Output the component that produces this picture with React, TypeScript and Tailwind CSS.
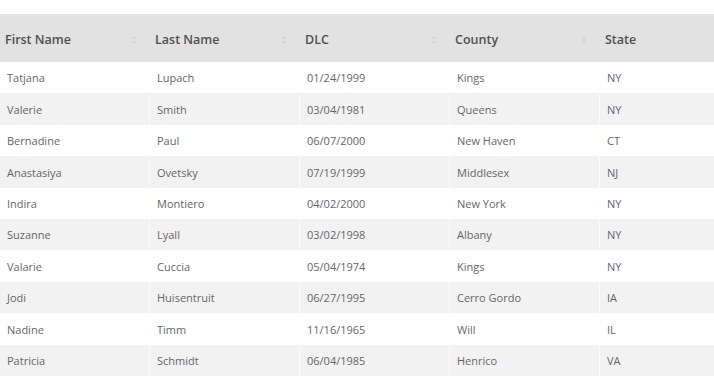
const columns = ['First Name', 'Last Name', 'DLC', 'County', 'State']

const rows: string[][] = [
  ['Tatjana', 'Lupach', '01/24/1999', 'Kings', 'NY'],
  ['Valerie', 'Smith', '03/04/1981', 'Queens', 'NY'],
  ['Bernadine', 'Paul', '06/07/2000', 'New Haven', 'CT'],
  ['Anastasiya', 'Ovetsky', '07/19/1999', 'Middlesex', 'NJ'],
  ['Indira', 'Montiero', '04/02/2000', 'New York', 'NY'],
  ['Suzanne', 'Lyall', '03/02/1998', 'Albany', 'NY'],
  ['Valarie', 'Cuccia', '05/04/1974', 'Kings', 'NY'],
  ['Jodi', 'Huisentruit', '06/27/1995', 'Cerro Gordo', 'IA'],
  ['Nadine', 'Timm', '11/16/1965', 'Will', 'IL'],
  ['Patricia', 'Schmidt', '06/04/1985', 'Henrico', 'VA'],
]

function SortIcon() {
  return (
    <svg width="6" height="10" viewBox="0 0 6 10" className="text-[#d6d6d6]">
      <path d="M3 0.5 L5.5 4 L0.5 4 Z" fill="currentColor" />
      <path d="M3 9.5 L5.5 6 L0.5 6 Z" fill="currentColor" />
    </svg>
  )
}

export default function App() {
  return (
    <div className="h-[388px] w-[714px] overflow-hidden bg-white pt-[14px] font-['Open_Sans',sans-serif]">
      <div className="w-[750px]">
        <div className="grid h-[48px] grid-cols-[repeat(5,150px)] bg-[#e2e2e2]">
          {columns.map((c, i) => (
            <div key={c} className="flex items-center justify-between pl-[5px] pr-[13px] pt-[4px]">
              <span className="text-[12.5px] font-semibold text-[#505050]">{c}</span>
              {i < columns.length - 1 && <SortIcon />}
            </div>
          ))}
        </div>
        {rows.map((r, ri) => (
          <div
            key={ri}
            className={`grid h-[31.4px] grid-cols-[repeat(5,150px)] ${ri % 2 === 1 ? 'bg-[#f2f2f2]' : 'bg-white'}`}
          >
            {r.map((v, ci) => (
              <div
                key={ci}
                className={`flex items-center pl-[7px] pt-[2px] text-[11px] text-[#666] ${ci < 4 ? 'border-r border-white/70' : ''}`}
              >
                {v}
              </div>
            ))}
          </div>
        ))}
      </div>
    </div>
  )
}
